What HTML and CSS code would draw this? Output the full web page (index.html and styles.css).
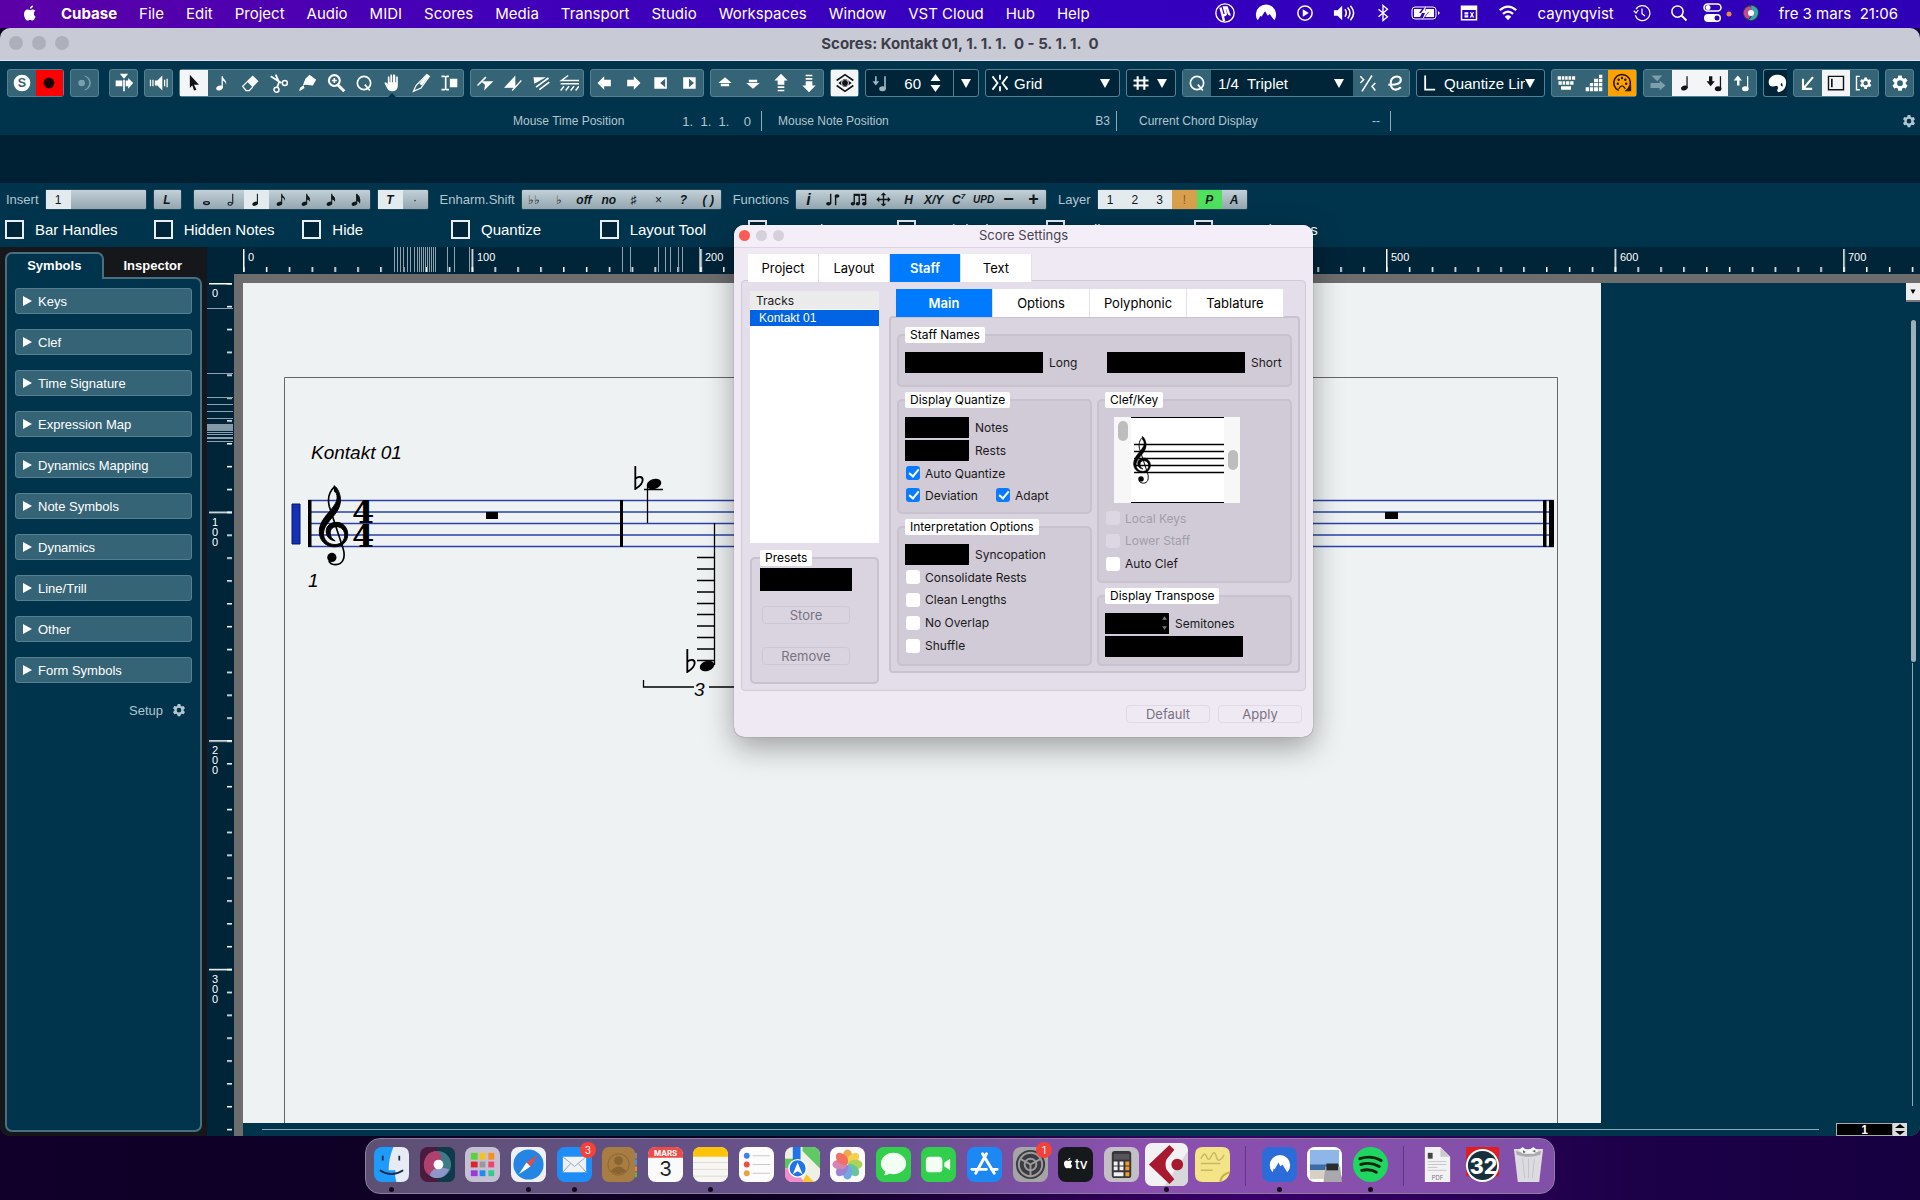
FILE: index.html
```html
<!DOCTYPE html>
<html lang="en">
<head>
  <meta charset="UTF-8">
  <meta name="viewport" content="width=device-width, initial-scale=1.0">
  <title>Scores: Kontakt 01</title>
  <link rel="stylesheet" href="styles.css">
</head>
<body>

  <!-- Shared shapes -->
  <svg class="defs" aria-hidden="true">
    <symbol id="clef" viewBox="955 748 92 245">
      <path d="M1003 750C1013 756 1023 775 1022 797C1020 824 1002 840 989 856C976 872 969 885 971 900C975 920 990 929 1008 928C1025 927 1035 915 1035 900C1035 885 1025 874 1010 874C998 874 991 883 991 893C991 905 997 911 1006 917C988 914 979 904 979 888C979 871 993 861 1011 861C1030 861 1044 878 1044 897C1044 920 1027 935 1004 935C978 935 958 917 958 889C958 868 970 850 985 833C1000 815 1011 802 1012 787C1012 776 1009 770 1004 768Z" stroke="currentColor" stroke-width="3"/>
      <path d="M1004 754C988 768 983 790 988 812L1030 940C1038 966 1030 989 1008 989C1000 989 990 985 987 977" fill="none" stroke="currentColor" stroke-width="5"/>
      <circle cx="996" cy="967" r="14"/>
    </symbol>
    <symbol id="flat" viewBox="0 0 10 26">
      <path d="M1 0v25c5-3 8-6 8-10c0-4-5-4-8-1" fill="none" stroke="currentColor" stroke-width="2"/>
    </symbol>
    <symbol id="gear" viewBox="0 0 24 24">
      <path fill-rule="evenodd" d="M10 3h4l.6 2.8 1.7 1 2.7-.9 2 3.4-2.1 1.9v2l2.1 1.9-2 3.4-2.7-.9-1.7 1L14 21.400h-4l-.6-2.800-1.700-1-2.700.9-2-3.400 2.100-1.900v-2L3 9.300l2-3.400 2.700.9 1.700-1zM12 8.700a3.500 3.500 0 1 0 0 7a3.500 3.500 0 1 0 0-7z"/>
    </symbol>
    <symbol id="quarter" viewBox="0 0 24 24">
      <ellipse cx="10" cy="18" rx="4" ry="2.800" transform="rotate(-20 10 18)"/><path d="M12.500 4H14v14h-1.500z"/>
    </symbol>
    <symbol id="eighth" viewBox="0 0 24 24">
      <ellipse cx="9" cy="18" rx="4" ry="2.800" transform="rotate(-20 9 18)"/><path d="M11.500 4H13c0 4 5 4 4 10c-1-3-2-4-4-5v9h-1.500z"/>
    </symbol>
    <symbol id="caret" viewBox="0 0 10 10"><path d="M0 1h10L5 10z"/></symbol>
    <symbol id="apple" viewBox="0 0 24 24">
      <path d="M16 2c.2 2.300-1.800 4.400-4 4.400C11.700 4.200 13.800 2.200 16 2zM19.500 17c-1.300 3-2.600 5-4.300 5c-1.300 0-1.800-.8-3.200-.8s-2 .8-3.200.8C6.500 22 4 17.500 4 13.500C4 9.500 6.300 7.300 8.700 7.300c1.400 0 2.400.9 3.500.9c1 0 2.300-1 4-.9c1.200.1 2.400.7 3.100 1.800c-3 1.900-2.500 6.300.2 7.900z"/>
    </symbol>
  </svg>

  <!-- System menu bar -->
  <nav class="menubar">
    <a href="#" class="logo" aria-label="Apple"><svg class="i18"><use href="#apple"/></svg></a>
    <a href="#" class="app">Cubase</a>
    <a href="#">File</a>
    <a href="#">Edit</a>
    <a href="#">Project</a>
    <a href="#">Audio</a>
    <a href="#">MIDI</a>
    <a href="#">Scores</a>
    <a href="#">Media</a>
    <a href="#">Transport</a>
    <a href="#">Studio</a>
    <a href="#">Workspaces</a>
    <a href="#">Window</a>
    <a href="#">VST Cloud</a>
    <a href="#">Hub</a>
    <a href="#">Help</a>
    <div class="status">
      <svg class="i22" viewBox="0 0 24 24"><circle cx="12" cy="12" r="10" fill="none" stroke="currentColor" stroke-width="1.500"/><path d="M7 6l2 7c.5 2 3 2 4 0l-2-7h3l2 6c.5 2 1 2 2 2M9 13l2 8" fill="none" stroke="currentColor" stroke-width="2.600"/></svg>
      <svg class="i22" viewBox="0 0 24 24"><path d="M3 20A11 11 0 1 1 21 20L16 13l-2 2-3-5-4 6-1-1z"/></svg>
      <svg class="i18" viewBox="0 0 24 24"><circle cx="12" cy="12" r="9.500" fill="none" stroke="currentColor" stroke-width="2"/><path d="M9 7l8 5-8 5z"/></svg>
      <svg class="i22" viewBox="0 0 24 24"><path d="M1 9h4l5-5v16l-5-5H1z"/><path d="M13 8q3 4 0 8M16 6q5 6 0 12M19 4q7 8 0 16" fill="none" stroke="currentColor" stroke-width="1.700"/></svg>
      <svg class="i18" viewBox="0 0 24 24"><path d="M6 7l12 10-6 5V2l6 5L6 17" fill="none" stroke="currentColor" stroke-width="1.800"/></svg>
      <svg class="battery" viewBox="0 0 30 16"><rect x="1" y="2" width="24" height="12" rx="3" fill="none" stroke="currentColor"/><path d="M3 4h8l-3 4h3l-2 4H3zM15 4h8v8h-9l4-5h-4z"/><path d="M15 1l-5 7h4l-3 7 7-9h-4zM27 6v4l2-2z"/></svg>
      <svg class="i18" viewBox="0 0 24 24"><path d="M2 3h20v18H2z" fill="none" stroke="currentColor" stroke-width="2"/><path d="M2 4h20v4H2zM6 11h5v3H6zM6 15h5v3H6zM13 11h2l1 2 1-2h2l-2 3 2 4h-2l-1-2-1 2h-2l2-4z"/></svg>
      <svg class="i22" viewBox="0 0 24 24"><path d="M3 9q9-8 18 0M6.500 13q5.500-5 11 0" fill="none" stroke="currentColor" stroke-width="2.500"/><path d="M8.500 16q3.500-3 7 0L12 20z"/></svg>
      <span>caynyqvist</span>
      <svg class="i18 clock" viewBox="0 0 24 24"><path d="M4 7a10 10 0 1 1-1 8M1 9l3 3 3-4M12 6v7l4 3" fill="none" stroke="currentColor" stroke-width="1.600"/></svg>
      <svg class="i18" viewBox="0 0 24 24"><circle cx="10" cy="10" r="7.500" fill="none" stroke="currentColor" stroke-width="2"/><path d="M15 15l7 7" stroke="currentColor" stroke-width="2.500"/></svg>
      <svg class="center" viewBox="0 0 30 20"><rect x="1" y="1" width="17" height="7" rx="3.500" fill="none" stroke="currentColor" stroke-width="1.500"/><circle cx="5" cy="4.500" r="2.500"/><rect x="1" y="11" width="17" height="8" rx="4"/><circle cx="14" cy="15" r="2.500" fill="#3000bd"/><circle cx="26" cy="11" r="2.500" fill="#f08848"/></svg>
      <svg class="i18" viewBox="0 0 24 24"><circle cx="12" cy="12" r="11" fill="#28345e"/><path d="M2 12C4 2 12 1 15 7s-4 8-6 13Q3 19 2 12z" fill="#c04c90"/><path d="M12 2c9 1 12 9 7 16-3 4-8 4-10 3 4-2 6-8 3-19z" fill="#36a9a8"/><circle cx="12" cy="12" r="4" fill="#fff"/></svg>
      <span>fre 3 mars&nbsp; 21:06</span>
    </div>
  </nav>

  <!-- Score editor window -->
  <main class="window">
    <header class="titlebar">
      <div class="lights"><i></i><i></i><i></i></div>
      <h1>Scores: Kontakt 01, 1. 1. 1.&nbsp; 0 - 5. 1. 1.&nbsp; 0</h1>
    </header>

    <div class="toolbar">
      <div class="group w2">
        <button aria-label="Solo Editor"><svg viewBox="0 0 24 24"><circle cx="12" cy="12" r="10"/><text x="12" y="17" class="s-letter">S</text></svg></button>
        <button class="rec" aria-label="Record in Editor"><svg viewBox="0 0 24 24"><circle cx="12" cy="12" r="6.500"/></svg></button>
      </div>
      <div class="group w1 dim"><button aria-label="Retrospective Record"><svg viewBox="0 0 24 24"><circle cx="8" cy="12" r="4"/><path d="M10 3a9 9 0 1 1 0 18q7-3 7-9t-7-9z"/></svg></button></div>
      <div class="group w1 apart"><button aria-label="Auto-Scroll"><svg viewBox="0 0 24 24"><path d="M2 9h8v7H2zM11 8h2v14h-2zM7 1h10l-5 6zM14 9h3V6l6 6-6 7v-3h-3z"/></svg></button></div>
      <div class="group w1"><button aria-label="Acoustic Feedback"><svg viewBox="0 0 24 24"><path d="M7 9h3l6-6v18l-6-6H7zM1 8h1.500v8H1zM4 8h1.500v8H4zM18 8h1.500v8H18zM21 7h1.500v10H21z"/></svg></button></div>
      <div class="group w10">
        <button class="on" aria-label="Object Selection"><svg viewBox="0 0 24 24"><path d="M7 2l11 12h-6l3 6-3 1-2-6-3 3z"/></svg></button>
        <button aria-label="Insert Note"><svg><use href="#eighth"/></svg></button>
        <button aria-label="Erase"><svg viewBox="0 0 24 24"><path d="M14 3l7 7-7 7-7-7z"/><path d="M8 10l-6 6 4 5h4l4-4" fill="none" stroke="currentColor" stroke-width="1.500"/></svg></button>
        <button aria-label="Split"><svg viewBox="0 0 24 24"><path d="M2 4l13 8M8 2l4 9-2 6" fill="none" stroke="currentColor" stroke-width="2.200"/><circle cx="19" cy="12" r="3" fill="none" stroke="currentColor" stroke-width="1.700"/><circle cx="9" cy="20" r="3" fill="none" stroke="currentColor" stroke-width="1.700"/></svg></button>
        <button aria-label="Glue"><svg viewBox="0 0 24 24"><path d="M15 2l8 6-4 7-9-1-3 1 3-8zM3 22q-1-5 5-7l1 3z"/></svg></button>
        <button aria-label="Zoom"><svg viewBox="0 0 24 24"><circle cx="10" cy="9" r="6.500" fill="none" stroke="currentColor" stroke-width="2.500"/><path d="M10 6v6M7 9h6" stroke="currentColor" stroke-width="2"/><path d="M14 14l8 8" stroke="currentColor" stroke-width="3.500"/></svg></button>
        <button aria-label="Display Quantize"><svg viewBox="0 0 24 24"><circle cx="12" cy="12" r="8" fill="none" stroke="currentColor" stroke-width="2"/><path d="M13 14l6 7" stroke="currentColor" stroke-width="2"/></svg></button>
        <button class="more" aria-label="Layout"><svg viewBox="0 0 24 24"><path d="M7 13V5q1-2 2 0v6h1V3q1-3 2 0v8h1V3q1-3 3 0v8h1V5q1-2 2 0v10q0 7-7 7q-4 0-6-4l-3-6q1-2 4 1z"/></svg></button>
        <button aria-label="Cut Notes"><svg viewBox="0 0 24 24"><path d="M3 22l3-7L19 2l3 2L12 18z" fill="none" stroke="currentColor" stroke-width="1.500"/><path d="M19 2l3 2-9 11-3-2z"/></svg></button>
        <button aria-label="Trim"><svg viewBox="0 0 24 24"><path d="M3 3h4l1 1 1-1h3v2H9v14h3v2H9l-1-1-1 1H3v-2h4V5H3zM13 7h9v10h-9z"/></svg></button>
      </div>
      <div class="group w4">
        <button aria-label="Flip Up"><svg viewBox="0 0 24 24"><path d="M3 15L13 5" stroke="currentColor" stroke-width="2"/><path d="M7 10h15L11 21l1-7z"/></svg></button>
        <button aria-label="Flip Down"><svg viewBox="0 0 24 24"><path d="M3 17L14 5v12zM11 21L22 9" stroke="currentColor" stroke-width="1.600"/></svg></button>
        <button aria-label="Group Lines"><svg viewBox="0 0 24 24"><path d="M3 5h15L4 13z"/><path d="M6 17L21 6M10 20L22 11" stroke="currentColor" stroke-width="2"/></svg></button>
        <button aria-label="Hatched Lines"><svg viewBox="0 0 24 24"><path d="M24 9H3l8-6M2 13h22M2 21l4-5M8 21l4-5M14 21l4-5M20 21l4-5" fill="none" stroke="currentColor" stroke-width="1.800"/></svg></button>
      </div>
      <div class="group w4">
        <button aria-label="Move Left"><svg viewBox="0 0 24 24"><path d="M3 12l8-8v4h8v8h-8v4z"/></svg></button>
        <button aria-label="Move Right"><svg viewBox="0 0 24 24"><path d="M21 12l-8-8v4H5v8h8v4z"/></svg></button>
        <button aria-label="Trim Start Left"><svg viewBox="0 0 24 24"><path fill-rule="evenodd" d="M4 5h15v14H4zM17 7v10l-6-5z"/></svg></button>
        <button aria-label="Trim End Right"><svg viewBox="0 0 24 24"><path fill-rule="evenodd" d="M5 5h15v14H5zM12 7v10l6-5z"/></svg></button>
      </div>
      <div class="group w4">
        <button aria-label="Move Up"><svg viewBox="0 0 24 24"><path d="M4 12l8-7 8 7zM7 13h10v3H7z"/></svg></button>
        <button aria-label="Move Down"><svg viewBox="0 0 24 24"><path d="M4 12l8 7 8-7zM7 8h10v3H7z"/></svg></button>
        <button aria-label="Octave Up"><svg viewBox="0 0 24 24"><path d="M4 9l8-8 8 8h-4v5H8V9zM8 16h8v2H8zM8 20h8v2H8z"/></svg></button>
        <button aria-label="Octave Down"><svg viewBox="0 0 24 24"><path d="M4 15l8 8 8-8h-4v-5H8v5zM8 6h8v2H8zM8 2h8v2H8z"/></svg></button>
      </div>
      <div class="group w1"><button class="on" aria-label="Show Layers"><svg viewBox="0 0 24 24"><path d="M2 9l10-7 10 7M2 15l10 7 10-7" fill="none" stroke="currentColor" stroke-width="2"/><path fill-rule="evenodd" d="M4 12q8-8 16 0q-8 8-16 0zM12 7.500a4.500 4.500 0 1 0 0 9a4.500 4.500 0 1 0 0-9z"/><circle cx="12" cy="12" r="3.500"/></svg></button></div>
      <div class="group w4 field">
        <svg class="faded" viewBox="0 0 24 24"><path d="M6 4h2v6h3l-4 5-4-5h3z"/><ellipse cx="15" cy="19" rx="4" ry="3"/><path d="M17 4h2v15h-2z"/></svg>
        <input type="text" class="velocity" value="60" aria-label="Note Insert Velocity">
        <svg class="stepper" viewBox="0 0 10 20"><path d="M0 8l5-7 5 7zM0 12l5 7 5-7z"/></svg>
        <button class="split" aria-label="Velocity presets"><svg class="caret"><use href="#caret"/></svg></button>
      </div>
      <div class="group field snap">
        <svg viewBox="0 0 24 24"><path d="M3 4l6 8-6 8M21 4l-6 8 6 8M12 2v6M12 16v6" fill="none" stroke="currentColor" stroke-width="2.200"/></svg>
        <select aria-label="Snap Type"><option>Grid</option></select>
        <svg class="caret"><use href="#caret"/></svg>
      </div>
      <div class="group field hash">
        <svg viewBox="0 0 24 24"><path d="M8 4v16M16 4v16M3 9h18M3 15h18" stroke="currentColor" stroke-width="2.500"/></svg>
        <svg class="caret"><use href="#caret"/></svg>
      </div>
      <div class="group field quant">
        <button class="raised" aria-label="Apply Quantize"><svg viewBox="0 0 24 24"><circle cx="12" cy="12" r="8" fill="none" stroke="currentColor" stroke-width="2"/><path d="M13 14l6 7" stroke="currentColor" stroke-width="2"/></svg></button>
        <select aria-label="Quantize Preset"><option>1/4&nbsp; Triplet</option></select>
        <svg class="caret"><use href="#caret"/></svg>
        <button class="raised" aria-label="Iterative Quantize"><svg viewBox="0 0 24 24"><path d="M4 4l4 4-4 4M6 22L18 3M22 12l-4 4 4 5" fill="none" stroke="currentColor" stroke-width="1.800"/></svg></button>
        <button class="raised" aria-label="Quantize Panel"><svg viewBox="0 0 24 24"><path d="M4 14q15 1 15-6c0-6-13-5-12 5c0 9 8 8 12 4" fill="none" stroke="currentColor" stroke-width="2.500"/></svg></button>
      </div>
      <div class="group field length">
        <svg viewBox="0 0 24 24"><path d="M5 3v17h12" fill="none" stroke="currentColor" stroke-width="2.200"/></svg>
        <select aria-label="Length Quantize"><option>Quantize Link</option></select>
        <svg class="caret"><use href="#caret"/></svg>
      </div>
      <div class="group w3">
        <button aria-label="Computer Keyboard Input"><svg viewBox="0 0 24 24"><path d="M2 4h4v4H2zM7 4h3v4H7zM11 4h3v4h-3zM15 4h3v4h-3zM19 4h4v4h-4zM3 10h4v4H3zM8 10h3v4H8zM12 10h4v4h-4zM17 10h4v4h-4zM6 16h12v4H6z"/></svg></button>
        <button aria-label="Step Input"><svg viewBox="0 0 24 24"><path d="M18 2h4v4h-4zM12 7h5v4h-5zM18 7h4v4h-4zM7 12h4v4H7zM12 12h5v4h-5zM18 12h4v4h-4zM2 17h4v5H2zM7 17h4v5H7zM12 17h5v5h-5zM18 17h4v5h-4z"/></svg></button>
        <button class="orange" aria-label="MIDI Input"><svg viewBox="0 0 24 24"><path d="M8 21A10 10 0 1 1 20 18" fill="none" stroke="currentColor" stroke-width="2"/><circle cx="7" cy="13" r="1.500"/><circle cx="8" cy="8" r="1.500"/><circle cx="12" cy="6" r="1.500"/><circle cx="16" cy="8" r="1.500"/><circle cx="17" cy="13" r="1.500"/><path d="M8 19q4-7 8 0" fill="none" stroke="currentColor" stroke-width="1.500"/><path d="M15 22h8v-8z"/></svg></button>
      </div>
      <div class="group w4">
        <button class="ghost" aria-label="Move Insert Mode"><svg viewBox="0 0 24 24"><path d="M4 3h13l-6 7zM3 12h11V9l7 6-7 6v-3H3z"/></svg></button>
        <button class="on" aria-label="Record Pitch"><svg><use href="#quarter"/></svg></button>
        <button class="on" aria-label="Record Note-On"><svg viewBox="0 0 24 24"><path d="M6 4h4v6h3l-5 6-5-6h3zM19 4h1.500v15H19z"/><ellipse cx="17" cy="19" rx="4" ry="3"/></svg></button>
        <button aria-label="Record Note-Off"><svg viewBox="0 0 24 24"><path d="M7 3l5 6H9v6H6V9H2zM18 4h1.500v15H18z"/><ellipse cx="16" cy="19" rx="4" ry="3"/></svg></button>
      </div>
      <div class="group field palette"><svg viewBox="0 0 24 24"><path fill-rule="evenodd" d="M2 11C2-1 23-1 23 11q0 10-9 12q-3-1-1-4q1-5-4-3q-7 1-7-5zM18 12a2 2 0 1 0 1 4z"/></svg></div>
      <div class="group w3">
        <button aria-label="Open in Lower Zone"><svg viewBox="0 0 24 24"><path d="M18 5L7 18M6 7v12h11" fill="none" stroke="currentColor" stroke-width="2.500"/></svg></button>
        <button class="on" aria-label="Show Left Zone"><svg viewBox="0 0 24 24"><path d="M3 4h18v16H3z" fill="none" stroke="currentColor" stroke-width="1.700"/><path d="M6 7h2v10H6z"/></svg></button>
        <button aria-label="Set Up Window Layout"><svg viewBox="0 0 24 24"><path d="M7 4H3v16h4" fill="none" stroke="currentColor" stroke-width="1.700"/><use href="#gear" x="5" y="3" width="18" height="18"/></svg></button>
      </div>
      <div class="group w1"><button aria-label="Set Up Toolbar"><svg><use href="#gear"/></svg></button></div>
    </div>

    <div class="infoline">
      <div class="info time"><span>Mouse Time Position</span><span class="digits">1.&nbsp; 1.&nbsp; 1.&nbsp;&nbsp;&nbsp; 0</span></div>
      <div class="info note"><span>Mouse Note Position</span><span>B3</span></div>
      <div class="info chord"><span>Current Chord Display</span><span>--</span></div>
      <svg class="i16"><use href="#gear"/></svg>
    </div>

    <div class="band"></div>

    <!-- Extended toolbar -->
    <div class="tools">
      <span>Insert</span>
      <div class="keys insert"><button class="lit">1</button></div>
      <div class="keys lock"><button><b>L</b></button></div>
      <div class="keys k7 lead">
        <button aria-label="Whole"><svg viewBox="0 0 24 24"><ellipse cx="12" cy="17" rx="4" ry="2" fill="none" stroke="currentColor" stroke-width="2"/></svg></button>
        <button aria-label="Half"><svg viewBox="0 0 24 24"><ellipse cx="10" cy="18" rx="3" ry="2" fill="none" stroke="currentColor" stroke-width="1.500"/><path d="M13 4h1.500v14H13z"/></svg></button>
        <button class="lit" aria-label="Quarter"><svg><use href="#quarter"/></svg></button>
        <button aria-label="Eighth"><svg><use href="#eighth"/></svg></button>
        <button aria-label="Sixteenth"><svg viewBox="0 0 24 24"><use href="#eighth"/><path d="M12 8q5 2 5 7-2-3-5-3z"/></svg></button>
        <button aria-label="Thirty-second"><svg viewBox="0 0 24 24"><use href="#eighth"/><path d="M12 6q6 2 5 9-2-3-5-3z"/></svg></button>
        <button aria-label="Sixty-fourth"><svg viewBox="0 0 24 24"><use href="#eighth"/><path d="M12 4q7 3 5 14-2-4-5-4z"/></svg></button>
      </div>
      <div class="keys k2"><button class="lit"><b>T</b></button><button>·</button></div>
      <span class="lead">Enharm.Shift</span>
      <div class="keys k8"><button>♭♭</button><button>♭</button><button><b>off</b></button><button><b>no</b></button><button>♯</button><button>×</button><button><b>?</b></button><button><b>( )</b></button></div>
      <span class="lead">Functions</span>
      <div class="keys k10"><button><b class="big">i</b></button>
        <button aria-label="Flip Stems"><svg viewBox="0 0 24 24"><ellipse cx="5" cy="18" rx="3.500" ry="2.500"/><ellipse cx="17" cy="7" rx="3.500" ry="2.500"/><path d="M7 4h2v14H7zM14 7h2v13h-2z"/></svg></button>
        <button aria-label="Group Notes"><svg viewBox="0 0 24 24"><path d="M5 4h9v3H7v11H5zM12 4h2v14h-2zM15 4h8v15h-2V7h-6zM17 11h5v2h-5z"/><ellipse cx="4" cy="18" rx="3" ry="2.500"/><ellipse cx="11" cy="18" rx="3" ry="2.500"/><ellipse cx="20" cy="18" rx="3" ry="2.500"/></svg></button>
        <button aria-label="Move"><svg viewBox="0 0 24 24"><path d="M12 2l4 4h-3v5h5V8l4 4-4 4v-3h-5v5h3l-4 4-4-4h3v-5H6v3l-4-4 4-4v3h5V6H8z"/></svg></button>
        <button><b>H</b></button><button><b>X/Y</b></button><button><b>C<sup>7</sup></b></button><button><b class="small">UPD</b></button><button class="sign">−</button><button class="sign">+</button></div>
      <span class="lead">Layer</span>
      <div class="keys k6"><button class="lit">1</button><button class="lit">2</button><button class="lit">3</button><button class="amber">!</button><button class="green"><b>P</b></button><button><b>A</b></button></div>
    </div>

    <!-- Filter bar -->
    <div class="filters">
      <label><input type="checkbox">Bar Handles</label>
      <label><input type="checkbox">Hidden Notes</label>
      <label><input type="checkbox">Hide</label>
      <label><input type="checkbox">Quantize</label>
      <label><input type="checkbox">Layout Tool</label>
      <label><input type="checkbox">Grouping</label>
      <label><input type="checkbox">Cut/Rhythm</label>
      <label><input type="checkbox">Split Rests</label>
      <label><input type="checkbox">Stems/Beams</label>
    </div>

    <div class="editor">
      <aside class="sidebar">
        <div class="side-tabs"><button class="active">Symbols</button><button>Inspector</button></div>
        <div class="side-panel">
          <button><i></i>Keys</button>
          <button><i></i>Clef</button>
          <button><i></i>Time Signature</button>
          <button><i></i>Expression Map</button>
          <button><i></i>Dynamics Mapping</button>
          <button><i></i>Note Symbols</button>
          <button><i></i>Dynamics</button>
          <button><i></i>Line/Trill</button>
          <button><i></i>Other</button>
          <button><i></i>Form Symbols</button>
          <a href="#" class="setup">Setup <svg class="i16"><use href="#gear"/></svg></a>
        </div>
      </aside>

      <section class="score">
        <svg class="ruler-x">
          <defs>
            <pattern id="minorX" width="22.860" height="27" patternUnits="userSpaceOnUse"><path d="M0 20h1.500v5H0z"/></pattern>
            <pattern id="majorX" width="228.600" height="27" patternUnits="userSpaceOnUse"><path d="M0 2h1.500v23H0z"/></pattern>
          </defs>
          <rect width="100%" height="27" fill="url(#minorX)"/>
          <rect width="100%" height="27" fill="url(#majorX)"/>
          <path class="marks" d="M151 0v25M154 0v25M157 0v25M160 0v25M164 0v25M167 0v25M171 0v25M174 0v25M176 0v25M178 0v25M180 0v25M182 0v25M184 0v25M186 0v25M188 0v25M190 0v25M192 0v25M204 0v25M211 0v25M226 0v25M379 0v25M387 0v25M415 0v25M422 0v25M427 0v25M435 0v25M439 0v25M456 0v25"/>
          <text x="5" y="14">0</text><text x="234" y="14">100</text><text x="462" y="14">200</text><text x="691" y="14">300</text><text x="919" y="14">400</text><text x="1148" y="14">500</text><text x="1377" y="14">600</text><text x="1605" y="14">700</text>
        </svg>
        <svg class="ruler-y">
          <defs>
            <pattern id="minorY" width="27" height="22.860" patternUnits="userSpaceOnUse"><path d="M20 0h5v1.500h-5z"/></pattern>
            <pattern id="majorY" width="27" height="228.600" patternUnits="userSpaceOnUse"><path d="M2 0h23v1.500H2z"/></pattern>
          </defs>
          <rect width="27" height="100%" fill="url(#minorY)"/>
          <rect width="27" height="100%" fill="url(#majorY)"/>
          <path class="marks" d="M0 25h26M0 90h26M0 114h26M0 121h26M0 128h26M0 135h26M0 149h26M0 151h26M0 154h26M0 155h26M0 158h26"/>
          <path d="M0 141h26v7H0z" fill="#8499a5"/>
          <text x="5" y="14">0</text>
          <text x="5" y="243">1</text><text x="5" y="253">0</text><text x="5" y="263">0</text>
          <text x="5" y="471">2</text><text x="5" y="481">0</text><text x="5" y="491">0</text>
          <text x="5" y="700">3</text><text x="5" y="710">0</text><text x="5" y="720">0</text>
        </svg>

        <div class="view">
          <!-- Page, 1 unit = 1px -->
          <svg class="paper">
            <path d="M41.500 900V94.500h1273V900" fill="none" stroke="#666"/>
            <path d="M65 217.500h1246M65 229h1246M65 240.500h1246M65 252h1246M65 263.500h1246" stroke="#2b41a8" stroke-width="1.300"/>
            <path d="M49 221h8v40h-8z" fill="#1230b8" stroke="#0a1850"/>
            <path d="M65 217h3.500v47H65zM377 217h3v47h-3zM1300 217h3.500v47h-3.500zM1306 217h5v47h-5z"/>
            <path d="M243 229h12v7h-12zM1142 229h13v7h-13z"/>
            <use href="#clef" x="75" y="202" width="31" height="81"/>
            <text x="109" y="240" class="meter">4</text><text x="109" y="264" class="meter">4</text>
            <text x="68" y="176" class="label">Kontakt 01</text>
            <text x="65" y="304" class="label">1</text>
            <use href="#flat" x="391" y="183" width="10" height="24"/>
            <ellipse cx="411" cy="201" rx="7.500" ry="5" transform="rotate(-18 411 201)"/>
            <path d="M404.500 202v38M401 206.500h19" stroke="#000" stroke-width="1.300"/>
            <use href="#flat" x="443" y="366" width="10" height="24"/>
            <ellipse cx="464" cy="383" rx="7.500" ry="5" transform="rotate(-18 464 383)"/>
            <path d="M471.500 240v142M454 274.500h18M454 286h18M454 297.500h18M454 309h18M454 320.500h18M454 331.500h18M454 343h18M454 354.500h18M454 366h18M454 377.500h18" stroke="#000" stroke-width="1.300"/>
            <path d="M400.500 397v7H451M466 404h40" fill="none" stroke="#000" stroke-width="1.300"/>
            <text x="451" y="413" class="label">3</text>
          </svg>
          <div class="vscroll"><button aria-label="Scroll options"><svg class="caret"><use href="#caret"/></svg></button><i></i></div>
        </div>
        <footer class="hscroll"><i></i><input type="text" value="1" aria-label="Page"><svg viewBox="0 0 14 13"><path d="M0 0h14v13H0z" fill="#ddd"/><path d="M2 5l5-4 5 4zM2 8h10l-5 4z"/></svg></footer>
      </section>
    </div>
  </main>

  <!-- Score Settings dialog -->
  <div class="dialog" role="dialog" aria-labelledby="dialogTitle">
    <header><div class="lights small-lights"><i class="close"></i><i></i><i></i></div><h2 id="dialogTitle">Score Settings</h2></header>
    <div class="tabs"><button>Project</button><button>Layout</button><button class="active">Staff</button><button>Text</button></div>
    <div class="sheet">
      <div class="left">
        <div class="tracks"><h3>Tracks</h3><button>Kontakt 01</button></div>
        <fieldset class="presets">
          <legend>Presets</legend>
          <select aria-label="Preset"><option></option></select>
          <button class="mac" disabled>Store</button>
          <button class="mac" disabled>Remove</button>
        </fieldset>
      </div>
      <div class="right">
        <div class="tabs wide"><button class="active">Main</button><button>Options</button><button>Polyphonic</button><button>Tablature</button></div>
        <div class="page">
          <fieldset class="names">
            <legend>Staff Names</legend>
            <div class="row"><input type="text" id="longName" class="long"><label for="longName">Long</label><input type="text" id="shortName" class="long"><label for="shortName">Short</label></div>
          </fieldset>
          <div class="column">
            <fieldset>
              <legend>Display Quantize</legend>
              <div class="row"><select id="notes"><option></option></select><label for="notes">Notes</label></div>
              <div class="row"><select id="rests"><option></option></select><label for="rests">Rests</label></div>
              <div class="row tick"><label class="check"><input type="checkbox" checked>Auto Quantize</label></div>
              <div class="row tick pair"><label class="check"><input type="checkbox" checked>Deviation</label><label class="check"><input type="checkbox" checked>Adapt</label></div>
            </fieldset>
            <fieldset>
              <legend>Interpretation Options</legend>
              <div class="row"><select id="sync"><option></option></select><label for="sync">Syncopation</label></div>
              <div class="row tick"><label class="check"><input type="checkbox">Consolidate Rests</label></div>
              <div class="row"><label class="check"><input type="checkbox">Clean Lengths</label></div>
              <div class="row"><label class="check"><input type="checkbox">No Overlap</label></div>
              <div class="row"><label class="check"><input type="checkbox">Shuffle</label></div>
            </fieldset>
          </div>
          <div class="column">
            <fieldset>
              <legend>Clef/Key</legend>
              <svg class="clef-view" viewBox="0 0 126 86">
                <path d="M0 0h126v86H0z" fill="#fff"/><path d="M0 0h17v86H0zM110 0h16v86h-16z" fill="#f7f7f7"/>
                <path d="M17 .5h93M17 85.500h93" stroke="#000"/>
                <path d="M20 27.500h90M20 34.500h90M20 41.500h90M20 48.500h90M20 55.500h90" stroke="#000" stroke-width="1.300"/>
                <use href="#clef" x="19" y="19" width="18" height="48"/>
                <rect x="4" y="4" width="10" height="20" rx="5" fill="#bdbdbd"/><rect x="114" y="33" width="10" height="20" rx="5" fill="#bdbdbd"/>
              </svg>
              <div class="row tick"><label class="check off"><input type="checkbox" disabled>Local Keys</label></div>
              <div class="row"><label class="check off"><input type="checkbox" disabled>Lower Staff</label></div>
              <div class="row"><label class="check"><input type="checkbox">Auto Clef</label></div>
            </fieldset>
            <fieldset>
              <legend>Display Transpose</legend>
              <div class="row"><div class="spin"><input type="text" id="semi"><svg viewBox="0 0 6 16"><path d="M0 4l3-4 3 4zM0 12l3 4 3-4z"/></svg></div><label for="semi">Semitones</label></div>
              <div class="row"><select class="long" aria-label="Instrument"><option></option></select></div>
            </fieldset>
          </div>
        </div>
      </div>
    </div>
    <footer><button class="mac" disabled>Default</button><button class="mac" disabled>Apply</button></footer>
  </div>

  <!-- Dock -->
  <nav class="dock">
    <button class="run" aria-label="Finder"><svg viewBox="0 0 36 36"><rect width="36" height="36" rx="8" fill="#1e9bf8"/><path d="M20 0h8q8 0 8 8v20q0 8-8 8h-5q-2-6-1-12h-7Q15 12 20 0z" fill="#e6ebf4"/><path d="M9 9v5M26 9v5M6 24q12 8 24 0" fill="none" stroke="#1d2b45" stroke-width="1.800"/></svg></button>
    <button aria-label="Siri"><svg viewBox="0 0 36 36"><rect width="36" height="36" rx="8" fill="#4a1b3e"/><path d="M18 0h10q8 0 8 8v20q0 8-8 8H18z" fill="#0e3a4a"/><circle cx="18" cy="18" r="14" fill="#3d7b86"/><path d="M4 18Q5 5 17 4q8 4 3 12L10 29Q4 26 4 18z" fill="#b0406c"/><path d="M10 29q4-12 20-6-4 9-12 9-5 0-8-3z" fill="#8f95c8"/><circle cx="19" cy="18" r="5" fill="#fff"/></svg></button>
    <button aria-label="Launchpad"><svg viewBox="0 0 36 36"><rect width="36" height="36" rx="8" fill="#c6c0d4"/><path d="M6 6h7v7H6z" fill="#5ed03c"/><path d="M15 6h6v7h-6z" fill="#f8c21c"/><path d="M24 6h6v7h-6z" fill="#f98f1b"/><path d="M6 15h7v6H6z" fill="#d82626"/><path d="M15 15h6v6h-6z" fill="#999"/><path d="M24 15h6v6h-6z" fill="#f2436b"/><path d="M6 24h7v6H6z" fill="#9a3bd8"/><path d="M15 24h6v6h-6z" fill="#1d8cf0"/><path d="M24 24h6v6h-6z" fill="#35c98a"/></svg></button>
    <button class="run" aria-label="Safari"><svg viewBox="0 0 36 36"><rect width="36" height="36" rx="8" fill="#eef0f4"/><circle cx="18" cy="18" r="15.500" fill="#2585e2"/><path d="M28 8L16 16l4 4z" fill="#f4453c"/><path d="M8 28l8-12 4 4z" fill="#fff"/></svg></button>
    <button class="run" aria-label="Mail"><svg viewBox="0 0 36 36"><rect width="36" height="36" rx="8" fill="#1f8df6"/><path d="M6 10h24v16H6z" fill="#eef2f6"/><path d="M6 10l12 10 12-10M6 26l8-9M30 26l-8-9" fill="none" stroke="#9aa6b4"/></svg><em>3</em></button>
    <button aria-label="Contacts"><svg viewBox="0 0 36 36"><path d="M33 6h3v6h-3z" fill="#888"/><path d="M33 13h3v6h-3z" fill="#4a90d0"/><path d="M33 20h3v5h-3z" fill="#f08a30"/><path d="M33 26h3v5h-3z" fill="#50c040"/><rect width="34" height="36" rx="7" fill="#a77d43"/><circle cx="17" cy="18" r="11" fill="none" stroke="#8a642f"/><circle cx="17" cy="14" r="4.500" fill="#8a642f"/><path d="M9 25q8-10 16 0q-8 6-16 0z" fill="#8a642f"/></svg></button>
    <button aria-label="Calendar"><svg viewBox="0 0 36 36"><rect width="36" height="36" rx="8" fill="#fafafa"/><path d="M0 11V8q0-8 8-8h20q8 0 8 8v3z" fill="#ea4d48"/><text x="18" y="9" class="cal-month">MARS</text><text x="18" y="30" class="cal-day">3</text></svg></button>
    <button class="run" aria-label="Notes"><svg viewBox="0 0 36 36"><rect width="36" height="36" rx="8" fill="#f7f6f3"/><path d="M0 10V8q0-8 8-8h20q8 0 8 8v2z" fill="#fdc30b"/><path d="M0 16h36M0 23h36M0 30h36" stroke="#dcdad4"/></svg></button>
    <button aria-label="Reminders"><svg viewBox="0 0 36 36"><rect width="36" height="36" rx="8" fill="#fcfcfc"/><circle cx="8" cy="9" r="3" fill="#3a86e8"/><circle cx="8" cy="18" r="3" fill="#ea5040"/><circle cx="8" cy="27" r="3" fill="#eda040"/><path d="M14 9h18M14 18h18M14 27h18" stroke="#c8c8c8"/></svg></button>
    <button aria-label="Maps"><svg viewBox="0 0 36 36"><rect width="36" height="36" rx="8" fill="#eef0e6"/><path d="M18 0h10q8 0 8 8v14L18 4z" fill="#62c866"/><path d="M0 12h12v10H0z" fill="#5cc55c"/><path d="M0 22h8l12 14H8q-8 0-8-8z" fill="#f08cc8"/><path d="M22 28l8 8h-12z" fill="#f9c62c"/><path d="M8 0h8v16H8z" fill="#1e74e8"/><circle cx="13" cy="22" r="9" fill="#1e74e8" stroke="#fff" stroke-width="1.500"/><path d="M13 16l5 12-5-3-5 3z" fill="#fff"/></svg></button>
    <button aria-label="Photos"><svg viewBox="0 0 36 36"><rect width="36" height="36" rx="8" fill="#fbfbfb"/><g opacity=".85"><ellipse cx="18" cy="10" rx="5" ry="7.500" fill="#f39a2b"/><ellipse cx="18" cy="10" rx="5" ry="7.500" fill="#f2ca2c" transform="rotate(45 18 18)"/><ellipse cx="18" cy="10" rx="5" ry="7.500" fill="#a3cc3c" transform="rotate(90 18 18)"/><ellipse cx="18" cy="10" rx="5" ry="7.500" fill="#4cbf88" transform="rotate(135 18 18)"/><ellipse cx="18" cy="10" rx="5" ry="7.500" fill="#5a9ae0" transform="rotate(180 18 18)"/><ellipse cx="18" cy="10" rx="5" ry="7.500" fill="#8a6fc8" transform="rotate(225 18 18)"/><ellipse cx="18" cy="10" rx="5" ry="7.500" fill="#d070a8" transform="rotate(270 18 18)"/><ellipse cx="18" cy="10" rx="5" ry="7.500" fill="#f0584a" transform="rotate(315 18 18)"/></g></svg></button>
    <button aria-label="Messages"><svg viewBox="0 0 36 36"><rect width="36" height="36" rx="8" fill="#32cf4c"/><ellipse cx="18" cy="17" rx="13" ry="11" fill="#f4fff4"/><path d="M9 23q1 5-1 6 5 0 7-3z" fill="#f4fff4"/></svg></button>
    <button aria-label="FaceTime"><svg viewBox="0 0 36 36"><rect width="36" height="36" rx="8" fill="#32cf4c"/><rect x="5" y="10" width="17" height="16" rx="4" fill="#f4fff4"/><path d="M24 16l6-4v12l-6-4z" fill="#f4fff4"/></svg></button>
    <button aria-label="App Store"><svg viewBox="0 0 36 36"><rect width="36" height="36" rx="8" fill="#1c88f4"/><path d="M20 7L9 27M16 7l12 20M5 23h15M25 23h6" stroke="#fff" stroke-width="3" stroke-linecap="round"/></svg></button>
    <button aria-label="System Preferences"><svg viewBox="0 0 36 36"><rect width="36" height="36" rx="8" fill="#a5a5a8"/><circle cx="18" cy="18" r="15" fill="#3c3c40"/><circle cx="18" cy="18" r="12" fill="none" stroke="#9c9ca0" stroke-width="2"/><circle cx="18" cy="18" r="6" fill="none" stroke="#9c9ca0" stroke-width="2"/><path d="M18 18L7 12M18 18v13M18 18l11-6" stroke="#9c9ca0" stroke-width="2"/></svg><em>1</em></button>
    <button aria-label="TV"><svg viewBox="0 0 36 36"><rect width="36" height="36" rx="8" fill="#16191c"/><use href="#apple" x="4" y="10" width="13" height="13" fill="#fff"/><text x="24" y="23" class="tv">tv</text></svg></button>
    <button aria-label="Calculator"><svg viewBox="0 0 36 36"><rect width="36" height="36" rx="8" fill="#c2c0c4"/><rect x="8" y="4" width="20" height="28" rx="3" fill="#37373b"/><path d="M10 7h16v6H10z" fill="#55555a"/><path d="M10 15h4v4h-4zM16 15h4v4h-4zM10 20h4v4h-4zM16 20h4v4h-4zM10 26h10v4H10z" fill="#f1f1f1"/><path d="M22 15h4v4h-4zM22 20h4v4h-4zM22 26h4v4h-4z" fill="#f59a23"/></svg></button>
    <button class="run large" aria-label="Cubase"><svg viewBox="0 0 44 44"><rect width="44" height="44" rx="7" fill="#f2f2f4"/><path d="M44 8v29q0 7-7 7H20z" fill="#d7d7dc"/><path d="M4 22L25 2l5 5-8 10q-2 5 0 10l8 10-5 5z" fill="#a8182e"/><circle cx="33" cy="22" r="6" fill="#a8182e"/></svg></button>
    <button aria-label="Stickies"><svg viewBox="0 0 36 36"><path d="M8 0h20q8 0 8 8v18q-2 8-10 10H8q-8 0-8-8V8q0-8 8-8z" fill="#f4e488"/><path d="M26 36q1-8 10-10" fill="none" stroke="#c2ae4a" stroke-width="2"/><path d="M6 12q4-8 6-2t5-1 5 1 8-2M6 17h20M6 24h12" fill="none" stroke="#c8b860" stroke-width="1.500"/></svg></button>
    <hr>
    <button class="run" aria-label="NordVPN"><svg viewBox="0 0 36 36"><rect width="36" height="36" rx="8" fill="#2c6cd8"/><path d="M11 26A10.500 10.500 0 1 1 26 26l-5-8-2 2-2-4-4 7-1-1z" fill="#fff"/></svg></button>
    <button aria-label="Preview"><svg viewBox="0 0 36 36"><rect width="36" height="36" rx="8" fill="#fff"/><path d="M3 3h30v16H3z" fill="#8fb6e8"/><path d="M3 18h30v6H3z" fill="#3c6ca8"/><path d="M3 24h30v9H3z" fill="#d8d0c0"/><path d="M19 20h15l2 16H17z" fill="#a9a9ad"/><path d="M20 17h12v7H20z" fill="#2b2b2e"/></svg></button>
    <button class="run" aria-label="Spotify"><svg viewBox="0 0 36 36"><circle cx="18" cy="18" r="18" fill="#1ed760"/><path d="M7 12q12-4 22 2M8 18q10-3 19 2M9 24q9-2 15 2" fill="none" stroke="#10240f" stroke-width="3" stroke-linecap="round"/></svg></button>
    <hr>
    <button aria-label="PDF document"><svg viewBox="0 0 36 36"><path d="M5 0h16l10 10v26H5z" fill="#f2f2f4"/><path d="M21 0v10h10z" fill="#c9c9ce"/><path d="M8 6h5v6H8z" fill="#444"/><path d="M8 15h19M8 18h19M8 21h10M8 24h19" stroke="#c4c4c4"/><text x="18" y="34" class="pdf">PDF</text></svg></button>
    <button aria-label="Sampler"><svg viewBox="0 0 36 36"><path d="M1 0h34v30H1z" fill="#e01d20"/><circle cx="18" cy="19" r="17" fill="#fff"/><circle cx="18" cy="19" r="15" fill="#16303c"/><text x="19" y="28" class="n32">32</text></svg></button>
    <button aria-label="Trash"><svg viewBox="0 0 36 36"><path d="M3 2h30l-4 34H7z" fill="#dcdce0"/><path d="M5 4q13 4 26 0l-1 4q-12 4-24 0z" fill="#a9a9ae"/><path d="M8 3l4-3 5 4 6-4 5 4-4 3H12z" fill="#f6f6f6"/><path d="M12 3l3 2-2 2zM22 4l3-1v3z" fill="#4d6a58"/><path d="M12 12l2 20M18 12v20M24 12l-2 20" stroke="#c3c3c8"/></svg></button>
  </nav>

</body>
</html>
```
FILE: styles.css
```css
* {
  box-sizing: border-box;
}

body {
  margin: 0;
  height: 100vh;
  display: flex;
  flex-direction: column;
  overflow: hidden;
  font-family: "Liberation Sans", Arial, sans-serif;
  font-size: 13px;
  color: #fff;
  background: linear-gradient(90deg, #10002a 0%, #0c0020 40%, #3a0068 65%, #1c0048 85%, #160040 100%);
}

.defs {
  position: absolute;
  width: 0;
  height: 0;
}

button, input, select {
  font: inherit;
  color: inherit;
  margin: 0;
  padding: 0;
  border: none;
  border-radius: 0;
  background: none;
}

select {
  appearance: none;
}

svg {
  fill: currentColor;
  flex: none;
}

h1, h2, h3 {
  margin: 0;
}

.i16 { width: 16px; height: 16px; }
.i18 { width: 18px; height: 18px; }
.i22 { width: 22px; height: 22px; }

/* System menu bar */
.menubar {
  flex: none;
  height: 28px;
  padding: 0 22px 2px 21px;
  display: flex;
  align-items: center;
  gap: 22px;
  font-family: Inter, sans-serif;
  font-size: 15px;
  white-space: nowrap;
  background: linear-gradient(90deg, #5b00a6, #4200b8 25%, #3600c0 50%, #2e00b6);
}

.menubar a {
  color: #fff;
  text-decoration: none;
}

.menubar .app {
  font-weight: 700;
}

.logo {
  display: flex;
}

.status {
  margin-left: auto;
  display: flex;
  align-items: center;
  gap: 19px;
}

.battery {
  width: 30px;
  height: 16px;
}

.center {
  width: 30px;
  height: 20px;
  margin: 0 -10px 0 -4px;
}

/* Score editor window */
.window {
  flex: 1;
  min-height: 0;
  display: flex;
  flex-direction: column;
  border-radius: 10px;
  overflow: hidden;
  background: #00344c;
}

.titlebar {
  flex: none;
  height: 33px;
  display: grid;
  grid-template-columns: 1fr auto 1fr;
  align-items: center;
  padding: 0 9px 2px;
  background: #c8cad6;
  border-bottom: 1px solid #dfe1ea;
  color: #3d3e48;
}

.titlebar h1 {
  font: 700 15px Inter, sans-serif;
}

.lights {
  display: flex;
  gap: 9px;
}

.lights i {
  width: 14px;
  height: 14px;
  border-radius: 50%;
  background: #adb0ba;
}

.toolbar {
  flex: none;
  display: flex;
  gap: 6px;
  padding: 8px 7px 0;
}

.group {
  display: flex;
  flex: none;
  align-items: center;
  height: 28px;
  border: 1px solid #56808f;
  border-radius: 3px;
  background: #366477;
}

.group > svg,
.group button svg {
  width: 20px;
  height: 20px;
}

.group button {
  flex: 1;
  min-width: 0;
  height: 26px;
  display: flex;
  align-items: center;
  justify-content: center;
}

.w1 { width: 29px; }
.w2 { width: 57px; }
.w3 { width: 86px; }
.w4 { width: 114px; }
.w10 { width: 285px; }

.apart {
  margin-left: 4px;
}

.group .on {
  background: #f3f5f7;
  color: #101418;
}

.group .rec {
  background: #ff0000;
  color: #1c0000;
}

.group .orange {
  background: #ffa200;
  color: #2c1c00;
}

.dim button, .ghost {
  color: #7b9fac;
}

.s-letter {
  font-size: 15px;
  font-weight: 700;
  text-anchor: middle;
  fill: #366477;
}

.more {
  position: relative;
}

.more::after {
  content: "";
  position: absolute;
  bottom: -1px;
  border: 4px solid transparent;
  border-top: none;
  border-bottom-color: #00344c;
}

.group.field {
  background: #002438;
  padding-left: 4px;
  font-size: 15px;
}

.field select {
  flex: 1;
  min-width: 0;
  text-overflow: clip;
}

.group .caret {
  width: 10px;
  height: 10px;
}

.group .faded {
  color: #9fb4bf;
}

.velocity {
  width: 28px;
  margin-left: 3px;
  text-align: right;
}

.group .stepper {
  width: 11px;
  height: 20px;
  margin: 0 12px 0 9px;
}

.group .split {
  border-left: 1px solid #56808f;
}

.snap { width: 135px; padding-right: 9px; }
.snap select { margin-left: 4px; }
.hash { width: 50px; padding-right: 8px; justify-content: space-between; }
.quant { width: 228px; }
.quant.field { padding-left: 0; }
.quant select { margin-left: 7px; }
.quant .caret { margin-right: 9px; }
.length { width: 129px; padding-right: 9px; }
.length select { margin-left: 3px; }

.quant button.raised {
  flex: none;
  width: 28px;
  background: #366477;
}

.palette {
  width: 24px;
  border-right: none;
  border-radius: 3px 0 0 3px;
}

.palette.field {
  padding-left: 3px;
}

.infoline {
  flex: none;
  height: 20px;
  margin: 14px 0 4px 513px;
  padding-right: 3px;
  display: flex;
  align-items: center;
  font-size: 12px;
  color: #b3c5cf;
}

.info {
  height: 20px;
  display: flex;
  align-items: center;
  justify-content: space-between;
  border-right: 1px solid #8fa9b5;
}

.time { width: 249px; padding-right: 10px; }
.note { width: 355px; padding: 0 6px 0 16px; }
.chord { width: 274px; padding: 0 10px 0 22px; }
.infoline .i16 { margin-left: auto; }

.digits {
  font-size: 13px;
}

.band {
  flex: none;
  height: 48px;
  background: #002034;
}

/* Extended toolbar */
.tools {
  flex: none;
  display: flex;
  align-items: center;
  gap: 6px;
  padding: 6px 6px 0;
  font-size: 13px;
  color: #b3c5cf;
}

.tools .lead {
  margin-left: 5px;
}

.keys {
  display: flex;
  height: 21px;
  border: 1px solid #1d4254;
  border-radius: 2px;
  background: linear-gradient(#c3d0d7, #93a6b0);
  color: #10181c;
}

.keys button {
  flex: 1;
  min-width: 0;
  display: flex;
  align-items: center;
  justify-content: center;
  font-size: 12px;
  white-space: nowrap;
}

.keys svg {
  width: 17px;
  height: 17px;
}

.keys b {
  font-style: italic;
}

.keys sup {
  font-size: 8px;
}

.keys .big { font-size: 16px; }
.keys .small { font-size: 10px; }
.keys .sign { font-size: 18px; font-weight: 700; }
.keys .lit { background: #e4ebee; }
.keys .amber { background: #d8a04c; color: #8a5c18; }
.keys .green { background: #4fe05e; }

.insert { width: 102px; }
.insert button { flex: none; width: 25px; }
.lock { width: 29px; }
.k2 { width: 52px; }
.k6 { width: 151px; }
.k7 { width: 178px; }
.k8 { width: 201px; }
.k10 { width: 252px; }

/* Filter bar */
.filters {
  flex: none;
  width: 1343px;
  display: grid;
  grid-template-columns: repeat(9, 1fr);
  padding: 10px 0 8px 5px;
  font-size: 15px;
}

.filters label {
  display: flex;
  align-items: center;
  gap: 11px;
  height: 19px;
  white-space: nowrap;
}

.filters input {
  appearance: none;
  width: 19px;
  height: 19px;
  border: 2px solid #e8eef2;
  background: #002438;
}

.editor {
  flex: 1;
  min-height: 0;
  display: flex;
}

/* Left zone */
.sidebar {
  flex: none;
  width: 207px;
  padding: 5px 5px 4px;
  display: flex;
  flex-direction: column;
  background: #15171b;
}

.side-tabs {
  display: flex;
  height: 27px;
  font-weight: 700;
}

.side-tabs button {
  width: 100px;
}

.side-tabs .active {
  border: 2px solid #48707f;
  border-bottom: none;
  border-radius: 7px 7px 0 0;
  background: #00344c;
  z-index: 1;
  padding-bottom: 2px;
}

.side-panel {
  flex: 1;
  margin-top: -2px;
  padding: 9px 8px;
  display: flex;
  flex-direction: column;
  gap: 15px;
  border: 2px solid #48707f;
  border-radius: 0 7px 7px 7px;
  background: #00344c;
}

.side-panel button {
  height: 26px;
  padding-left: 7px;
  display: flex;
  align-items: center;
  gap: 6px;
  border: 1px solid #56808f;
  border-radius: 3px;
  background: #366477;
}

.side-panel i {
  border: 5px solid transparent;
  border-left: 9px solid #fff;
  border-right: none;
}

.setup {
  align-self: flex-end;
  display: flex;
  align-items: center;
  gap: 8px;
  margin: 4px 5px 0 0;
  color: #b3c5cf;
  text-decoration: none;
}

/* Score area */
.score {
  flex: 1;
  min-width: 0;
  display: grid;
  grid-template-columns: 27px 9px 1fr;
  grid-template-rows: 27px 9px 1fr 13px;
  background: #6d6d6d;
}

.score::before {
  content: "";
  grid-area: 1 / 1 / 2 / 4;
  background: #002438;
}

.ruler-x {
  grid-area: 1 / 3 / 2 / 4;
  width: 100%;
  height: 27px;
}

.ruler-y {
  grid-area: 2 / 1 / 5 / 2;
  width: 27px;
  height: 100%;
  padding-top: 9px;
  background: #002438;
}

.ruler-x text,
.ruler-y text {
  font-size: 11px;
}

.marks {
  fill: none;
  stroke: #8da2ae;
  shape-rendering: crispEdges;
}

.view {
  grid-area: 3 / 3 / 4 / 4;
  min-height: 0;
  overflow: hidden;
  display: flex;
  justify-content: space-between;
  background: #00344c;
}

.paper {
  width: 1358px;
  height: 100%;
  background: #eff2f3;
  color: #000;
}

.label {
  font-size: 19px;
  font-style: italic;
}

.meter {
  font: 700 32px "DejaVu Serif", serif;
}

.vscroll {
  width: 14px;
  padding-bottom: 17px;
  display: flex;
  flex-direction: column;
  align-items: center;
  background: linear-gradient(#8fa9b5, #8fa9b5) 6px 380px / 1px 443px no-repeat;
}

.vscroll button {
  width: 14px;
  height: 19px;
  display: flex;
  align-items: center;
  justify-content: center;
  background: #eee;
  border-bottom: 2px solid #777;
  color: #000;
}

.vscroll .caret {
  width: 8px;
  height: 5px;
}

.vscroll i {
  width: 5px;
  height: 342px;
  margin-top: 18px;
  border-radius: 3px;
  background: #9dafb8;
}

.hscroll {
  grid-area: 4 / 3 / 5 / 4;
  padding: 0 13px 0 19px;
  display: flex;
  align-items: center;
  background: #00344c;
}

.hscroll i {
  flex: 1;
  height: 1px;
  margin-right: 17px;
  background: #8fa9b5;
}

.hscroll input {
  width: 57px;
  height: 13px;
  border: 1px solid #aaa;
  background: #000;
  text-align: center;
  font-size: 12px;
  font-weight: 700;
}

.hscroll svg {
  width: 14px;
  height: 13px;
  color: #000;
}

/* Dialog */
.dialog {
  position: absolute;
  left: 734px;
  top: 225px;
  width: 579px;
  border-radius: 10px;
  overflow: hidden;
  background: #efe9f4;
  color: #1c1a20;
  font: 13px Inter, sans-serif;
  box-shadow: 0 0 1px rgba(0, 0, 0, 0.6), 0 10px 30px rgba(0, 0, 0, 0.35);
}

.dialog header {
  height: 23px;
  padding: 0 5px 2px;
  display: grid;
  grid-template-columns: 1fr auto 1fr;
  align-items: center;
  background: #f4eef8;
  border-bottom: 1px solid #ddd6e2;
}

.dialog h2 {
  font-size: 13px;
  font-weight: 400;
  color: #48444e;
}

.small-lights {
  gap: 6px;
}

.small-lights i {
  width: 11px;
  height: 11px;
  background: #d6d0da;
}

.small-lights .close {
  background: #fe5b54;
}

.tabs {
  display: flex;
  padding: 6px 0 0 14px;
}

.tabs button {
  width: 71px;
  height: 28px;
  background: #fff;
  border-right: 1px solid #e4deea;
  color: #000;
}

.tabs .active {
  background: #007aff;
  color: #fff;
  font-weight: 600;
}

.tabs.wide {
  padding: 0 0 0 7px;
}

.wide button {
  width: 97px;
}

.sheet {
  margin: -2px 7px 0;
  padding: 8px 5px 6px 8px;
  display: flex;
  gap: 10px;
  border: 1px solid #d0cad6;
  border-radius: 4px;
  background: #e4deea;
}

.tabs .active {
  z-index: 1;
}

.left {
  width: 129px;
  padding-top: 2px;
  display: flex;
  flex-direction: column;
  gap: 7px;
}

.tracks {
  height: 252px;
  background: #fff;
}

.tracks h3 {
  height: 18px;
  padding-left: 6px;
  font-size: 12px;
  font-weight: 400;
  line-height: 19px;
  background: #ebebeb;
}

.tracks button {
  width: 100%;
  height: 16px;
  padding-left: 9px;
  font: 12px "Liberation Sans", sans-serif;
  text-align: left;
  background: #0063e1;
  color: #fff;
}

.dialog fieldset {
  min-width: 0;
  margin: 0;
  padding: 8px 6px 6px;
  border: 2px solid #c8c2ce;
  border-radius: 5px;
  background: #d0cbd6;
}

.dialog legend {
  height: 16px;
  padding: 0 5px;
  border-radius: 2px;
  background: #fff;
  font-size: 12px;
  line-height: 16px;
  color: #000;
}

.dialog .presets {
  height: 134px;
  padding: 2px 8px;
  background: #dad4e0;
}

.presets select {
  display: block;
  width: 92px;
  height: 23px;
}

.presets .mac {
  display: block;
  width: 88px;
  margin: 15px 0 0 2px;
}

.presets .mac + .mac {
  margin-top: 23px;
}

.mac {
  height: 18px;
  border: 1px solid #cec8d4;
  border-radius: 4px;
  color: #77727e;
}

.right {
  flex: 1;
}

.page {
  margin-top: -1px;
  padding: 9px 6px 5px;
  display: grid;
  grid-template-columns: 195px 1fr;
  gap: 5px 5px;
  border: 2px solid #c8c2ce;
  border-radius: 4px;
  background: #dad4e0;
}

.dialog .names {
  grid-column: 1 / 3;
  padding-bottom: 11px;
}

.column {
  display: flex;
  flex-direction: column;
  gap: 5px;
}

.column fieldset:last-child {
  flex: 1;
}

.row {
  height: 23px;
  display: flex;
  align-items: center;
  gap: 6px;
  font-size: 12px;
}

.row.tick {
  height: 22px;
}

.row select,
.row input[type="text"],
.presets select {
  background: #000;
  color: #fff;
}

.row select,
.row input[type="text"] {
  width: 64px;
  height: 21px;
}

.row select.long,
.row input.long {
  width: 138px;
}

.names label:nth-of-type(1) {
  width: 52px;
}

.check {
  display: flex;
  align-items: center;
  gap: 5px;
  white-space: nowrap;
}

.check input {
  appearance: none;
  width: 14px;
  height: 14px;
  margin-left: 1px;
  border-radius: 3px;
  background: #fff;
}

.check input:checked {
  background: #0a7aff;
}

.check input:checked::before {
  content: "";
  display: block;
  width: 4px;
  height: 8px;
  margin: 1px 0 0 5px;
  border: solid #fff;
  border-width: 0 2px 2px 0;
  transform: rotate(40deg);
}

.check.off {
  color: #a39eaa;
}

.check.off input {
  background: #dcd7e2;
}

.pair .check:first-child {
  width: 84px;
}

.clef-view {
  display: block;
  width: 126px;
  height: 86px;
  margin: 1px 0 4px 9px;
  color: #000;
}

.spin {
  position: relative;
  display: flex;
}

.spin svg {
  position: absolute;
  right: 2px;
  top: 3px;
  width: 5px;
  height: 14px;
  color: #777;
}

.dialog footer {
  display: flex;
  justify-content: flex-end;
  gap: 8px;
  padding: 14px 11px;
}

.dialog footer .mac {
  width: 84px;
  border-color: #dfd9e5;
}

/* Dock */
.dock {
  flex: none;
  width: 62%;
  height: 56px;
  margin: 2px auto 6px;
  padding: 0 3px;
  display: flex;
  align-items: center;
  border: 1px solid #8d7f9f;
  border-radius: 15px;
  background: linear-gradient(90deg, #5d5073, #6a5292 45%, #8b4fb0 65%, #8150a8);
}

.dock button {
  position: relative;
  flex: 1;
  height: 56px;
  display: flex;
  align-items: center;
  justify-content: center;
}

.dock svg {
  width: 35px;
  height: 35px;
  margin-bottom: 3px;
}

.dock .large svg {
  width: 43px;
  height: 43px;
}

.dock .run::after {
  content: "";
  position: absolute;
  bottom: 2px;
  width: 5px;
  height: 5px;
  border-radius: 50%;
  background: #120a1e;
}

.dock em {
  position: absolute;
  top: 4px;
  right: 1px;
  width: 16px;
  height: 16px;
  border-radius: 50%;
  background: #f6403a;
  font: 10px/16px Inter, sans-serif;
}

.dock hr {
  width: 1px;
  height: 40px;
  margin: 0 10px;
  border: none;
  background: #5c3a80;
}

.cal-month, .cal-day, .tv, .pdf, .n32 {
  font-family: Inter, sans-serif;
  text-anchor: middle;
}

.cal-month { font-size: 8px; font-weight: 700; }
.cal-day { font-size: 21px; fill: #222; }
.tv { font-size: 14px; font-weight: 500; }
.pdf { font-size: 6px; fill: #777; }
.n32 { font-size: 22px; font-weight: 800; }
```
